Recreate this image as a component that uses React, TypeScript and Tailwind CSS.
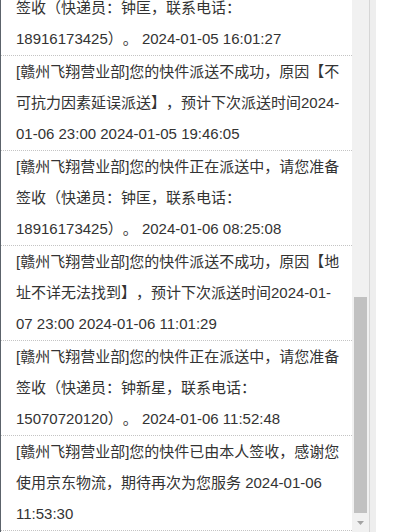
import React from 'react';

const TrackingLog = () => {
  const entries = [
    '[赣州飞翔营业部]您的快件正在派送中，请您准备签收（快递员：钟匡，联系电话：18916173425）。 2024-01-05 16:01:27',
    '[赣州飞翔营业部]您的快件派送不成功，原因【不可抗力因素延误派送】，预计下次派送时间2024-01-06 23:00 2024-01-05 19:46:05',
    '[赣州飞翔营业部]您的快件正在派送中，请您准备签收（快递员：钟匡，联系电话：18916173425）。 2024-01-06 08:25:08',
    '[赣州飞翔营业部]您的快件派送不成功，原因【地址不详无法找到】，预计下次派送时间2024-01-07 23:00 2024-01-06 11:01:29',
    '[赣州飞翔营业部]您的快件正在派送中，请您准备签收（快递员：钟新星，联系电话：15070720120）。 2024-01-06 11:52:48',
    '[赣州飞翔营业部]您的快件已由本人签收，感谢您使用京东物流，期待再次为您服务 2024-01-06 11:53:30'
  ];

  return (
    <div
      className="flex h-[532px] w-[394px] overflow-hidden bg-white"
      style={{ fontFamily: '"Liberation Sans", "Noto Sans CJK SC", sans-serif' }}
    >
      {/* left frame edge */}
      <div className="w-[1px] shrink-0 bg-[#5c636b]" />

      {/* Log list, scrolled to the bottom */}
      <div className="w-[351px] shrink-0 overflow-hidden">
        <div className="mt-[-39px]">
          {entries.map((text) => (
            <div
              key={text}
              className="border-b border-dotted border-[#c4c4c4] pl-[15px] pr-[7px] pb-[1px] text-[15px] leading-[31px] text-[#333] [text-spacing-trim:space-all]"
            >
              {text}
            </div>
          ))}
        </div>
      </div>

      {/* Scrollbar */}
      <div className="flex w-[17px] shrink-0 flex-col bg-[#f1f1f1]">
        <div className="h-[297px]" />
        <div className="mx-[2px] h-[216px] bg-[#c1c1c1]" />
        <div className="flex flex-1 items-center justify-center">
          <svg width="7" height="4" viewBox="0 0 7 4">
            <path d="M0 0 L7 0 L3.5 4 Z" fill="#a3a3a3" />
          </svg>
        </div>
      </div>
      <div className="w-[1px] shrink-0 bg-[#d6d6d6]" />
      <div className="w-[6px] shrink-0 bg-[#eeeeee]" />
      <div className="flex-1 bg-white" />
    </div>
  );
};

export default function App() {
  return <TrackingLog />;
}
